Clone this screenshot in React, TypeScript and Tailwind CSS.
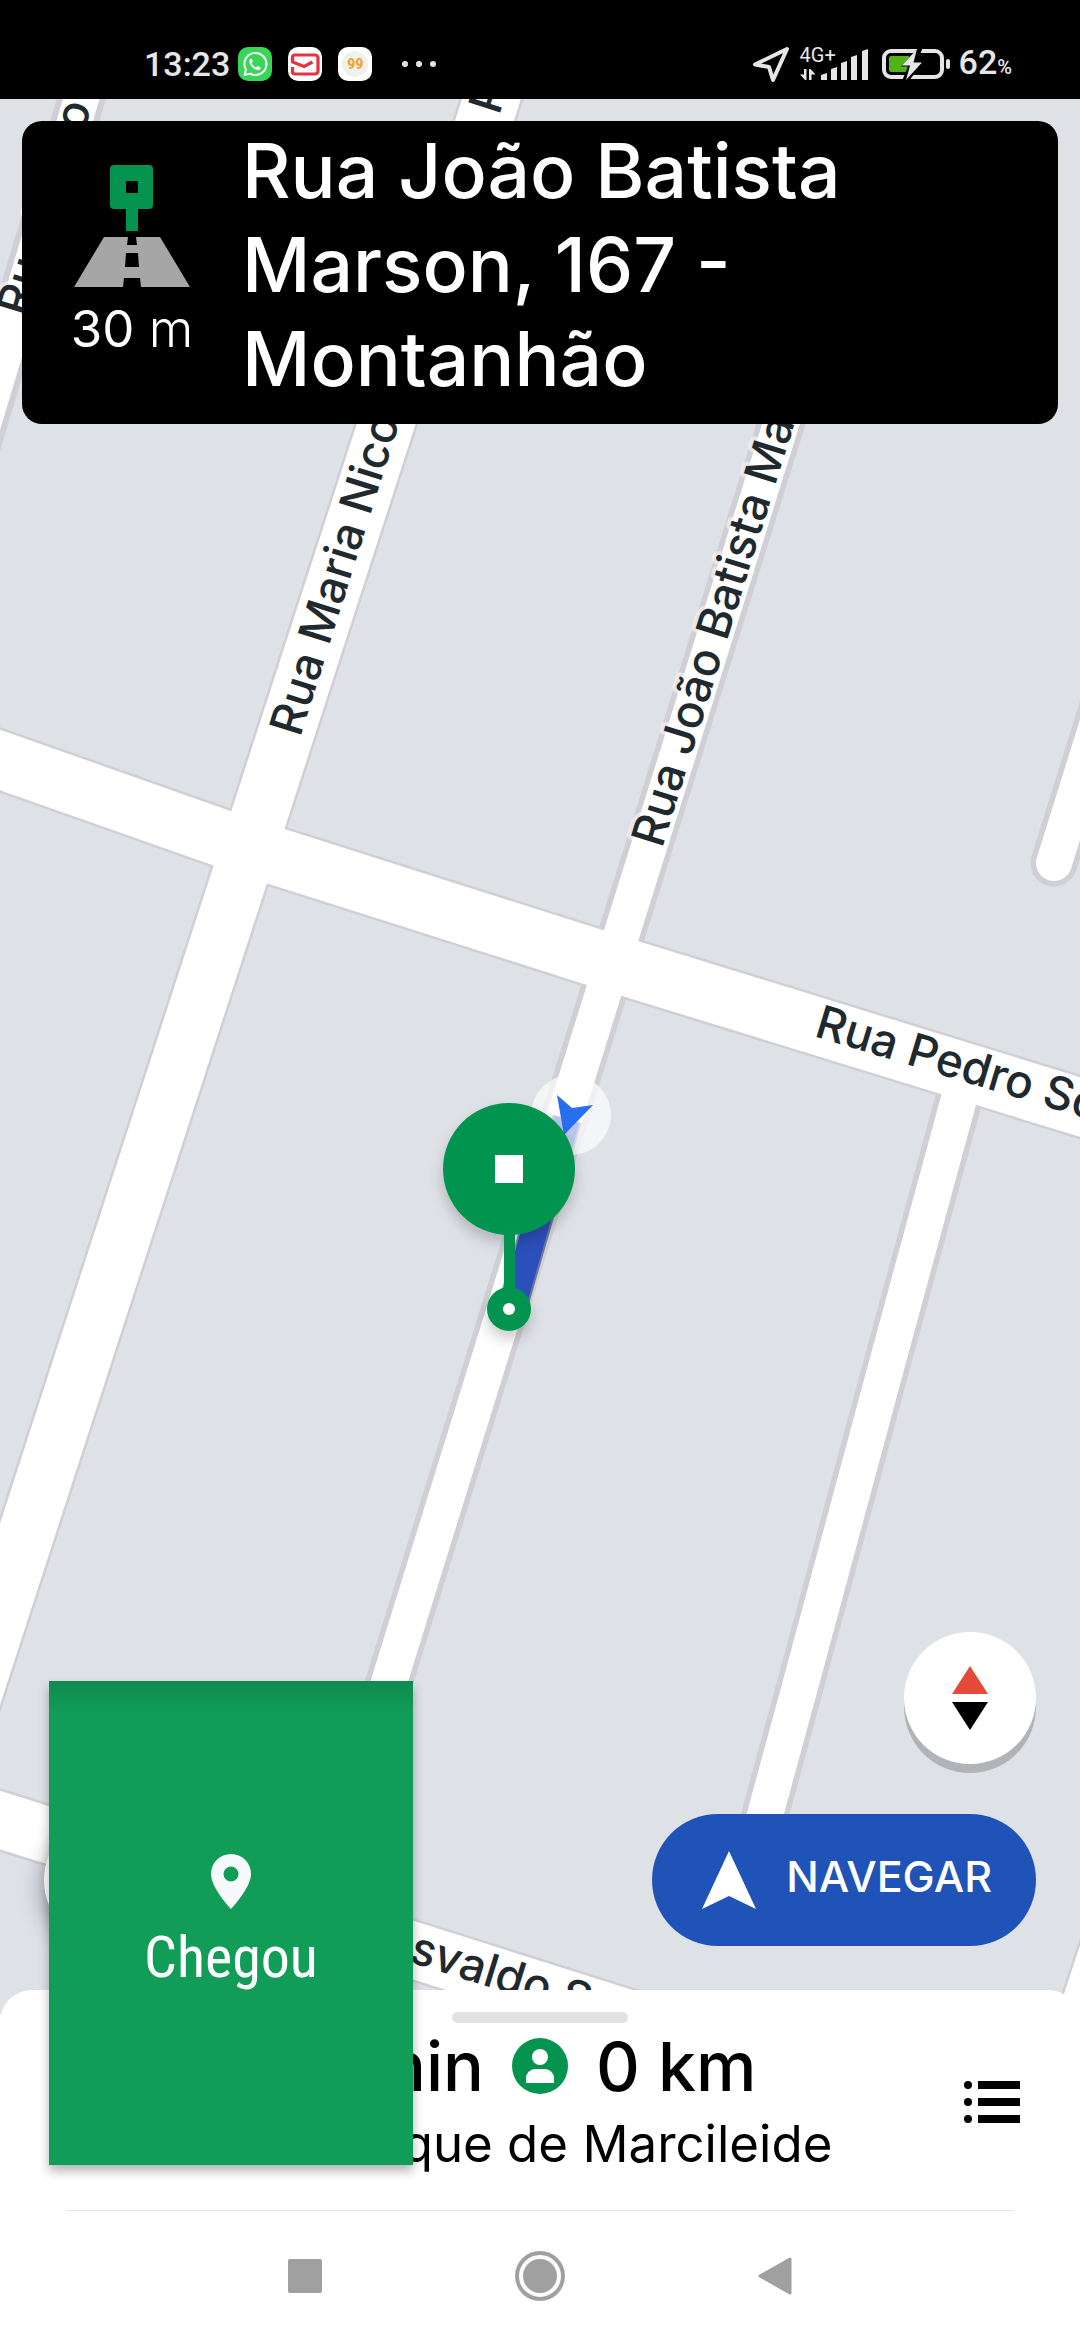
import React from 'react';

const APP_FONT = "font-['Inter','Liberation_Sans',sans-serif]";
const STATUS_FONT = "font-['Roboto','Liberation_Sans',sans-serif]";

interface Street {
  id: string;
  points: string;
  outer: number;
  inner: number;
  round?: boolean;
}

const streets: Street[] = [
  { id: 'mario', points: '93,60 -30,469', outer: 47, inner: 35 },
  { id: 'joao-batista', points: '820,300 781,424 626,920 489,1360 337,1850', outer: 47, inner: 36 },
  { id: 'side', points: '960,1095 888,1360 805,1668 750,1870', outer: 47, inner: 36 },
  { id: 'stub', points: '1130,620 1054,863', outer: 47, inner: 36, round: true },
  { id: 'maria', points: '508,48 232,900 -148,2070', outer: 61, inner: 56 },
  { id: 'pedro', points: '-20,753 0,760 250,848 612,963 1080,1107 1120,1119', outer: 62, inner: 57 },
  { id: 'osvaldo', points: '-20,1814 0,1820 413,1950 663,2029', outer: 61, inner: 56 },
  { id: 'corner', points: '1112,1938 1070,2065', outer: 61, inner: 56 },
];

const labels = [
  { text: 'Rua Mário A', x: 27, y: 318, angle: -73 },
  { text: 'P', x: 499, y: 116, angle: -72 },
  { text: 'Rua Maria Nico', x: 300, y: 738, angle: -72.5 },
  { text: 'Rua João Batista Ma', x: 662, y: 849, angle: -72.7 },
  { text: 'Rua Pedro Sc', x: 813, y: 1036, angle: 16.8 },
  { text: 'Osvaldo S', x: 374, y: 1951, angle: 17.3 },
];

const StreetMap: React.FC = () => (
  <svg
    className="absolute inset-x-0 top-0 w-full h-[calc(100%+24px)]"
    viewBox="0 99 1080 1915"
    preserveAspectRatio="xMidYMid slice"
    aria-label="Mapa"
  >
    <defs>
      <filter id="pinShadow" x="-30%" y="-30%" width="160%" height="170%">
        <feDropShadow dx="0" dy="8" stdDeviation="7" floodColor="#000" floodOpacity="0.2" />
      </filter>
    </defs>
    <rect x="0" y="99" width="1080" height="1915" fill="#dee1e6" />

    {/* casings first so that the crossings stay open */}
    {[true, false].map((casing) => (
      <g key={String(casing)} fill="none" stroke={casing ? '#cfcfd5' : '#ffffff'} strokeLinejoin="round">
        {streets.map((s) => (
          <polyline
            key={s.id}
            points={s.points}
            strokeWidth={casing ? s.outer : s.inner}
            strokeLinecap={s.round ? 'round' : 'butt'}
          />
        ))}
      </g>
    ))}

    <g
      className={APP_FONT}
      fontSize="46"
      fontWeight="500"
      fill="#20292d"
      stroke="#ffffff"
      strokeOpacity="0.5"
      strokeWidth="8"
      strokeLinejoin="round"
      paintOrder="stroke"
    >
      {labels.map((l) => (
        <text key={l.text} x={l.x} y={l.y} transform={`rotate(${l.angle} ${l.x} ${l.y})`}>
          {l.text}
        </text>
      ))}
    </g>

    {/* Route */}
    <path d="M567 1119 513 1305" stroke="#1c2f70" strokeOpacity="0.55" strokeWidth="30" />
    <path d="M567 1119 513 1305" stroke="#2b50bb" strokeWidth="26" />

    {/* Current position */}
    <circle cx="571" cy="1115" r="40" fill="#ffffff" fillOpacity="0.68" />
    <path d="M557 1095 572 1108 593 1105 564 1135Z" fill="#276ef1" />

    {/* Destination pin */}
    <g filter="url(#pinShadow)">
      <circle cx="509" cy="1169" r="66" fill="#05944f" />
      <circle cx="509" cy="1309" r="22" fill="#05944f" />
    </g>
    <rect x="504" y="1230" width="11" height="64" fill="#05944f" />
    <rect x="495" y="1155" width="28" height="28" fill="#ffffff" />
    <circle cx="509" cy="1309" r="6" fill="#ffffff" />
  </svg>
);

const StatusBar: React.FC = () => (
  <header className={`h-[99px] bg-black text-[#e6e6e6] flex justify-between pl-36 pr-[68px] pt-[44px] ${STATUS_FONT}`}>
    <div className="flex items-center h-10">
      <span className="text-[34px] leading-10 font-medium">13:23</span>
      <svg className="ml-2 w-[34px] h-[34px]" viewBox="0 0 34 34" aria-label="WhatsApp">
        <rect width="34" height="34" rx="10" fill="#36d657" />
        <path d="M6.600 28 8 22.600A11 11 0 1 1 12.200 26.600Z" fill="none" stroke="#fff" strokeWidth="2" strokeLinejoin="round" />
        <path d="M13 11.500c-1.600.8-2.200 2.300-1.500 4.300 1.300 3.700 3.900 6.200 7.500 7.200 1.900.5 3.500-.3 3.900-2.200l-3.300-1.900-1.600 1.600c-2-.8-3.500-2.300-4.400-4.200l1.300-1.700-1.300-3.100Z" fill="#fff" />
      </svg>
      <svg className="ml-4 w-[34px] h-[34px]" viewBox="0 0 34 34" aria-label="Correio">
        <rect width="34" height="34" rx="10" fill="#fff" />
        <path d="M4.500 20v4.500a2.500 2.500 0 0 0 2.500 2.500h20a3 3 0 0 0 3-3V11a3 3 0 0 0-3-3H7a2.500 2.500 0 0 0-2.500 2.500V15L16 19.500l8.500-4.500" fill="none" stroke="#e8323f" strokeWidth="3.200" />
      </svg>
      <span className="ml-4 size-[34px] rounded-[10px] bg-white flex items-center justify-center">
        <span className="size-[26px] rounded-full bg-[#f0f0f0] text-[#f0a92c] text-[14px] leading-[26px] font-black text-center">99</span>
      </span>
      <span className="ml-[30px] flex gap-2">
        <i className="size-[6px] rounded-full bg-[#e6e6e6]" />
        <i className="size-[6px] rounded-full bg-[#e6e6e6]" />
        <i className="size-[6px] rounded-full bg-[#e6e6e6]" />
      </span>
    </div>

    <div className="flex items-center h-10">
      <svg className="w-[38px] h-[38px]" viewBox="0 0 38 38" aria-label="Localização">
        <path d="M35 4 3 19.500 17 22 21 35Z" fill="none" stroke="#e6e6e6" strokeWidth="4" strokeLinejoin="round" />
      </svg>
      <div className="ml-[10px] relative w-[69px] h-[34px]">
        <span className="absolute left-0 top-0 text-[20px] leading-4">4G+</span>
        <svg className="w-[69px] h-[34px]" viewBox="0 0 69 34" fill="#e6e6e6" aria-label="Sinal">
          <path d="M4 22h2.500v11H5L0 27.500h4ZM9 33V22h1.500l5 5.500h-4V33Z" />
          <path d="M21 28l6-2v7h-6ZM31 22l6-2v13h-6ZM41 16l6-2v19h-6ZM51 10l6-2v25h-6ZM62 4l6-2v31h-6Z" />
        </svg>
      </div>
      <svg className="ml-3 w-[70px] h-[34px]" viewBox="0 0 70 34" aria-label="Bateria">
        <rect x="3" y="4" width="58" height="26" rx="7" fill="none" stroke="#e6e6e6" strokeWidth="4" />
        <rect x="8" y="9" width="21" height="16" rx="2" fill="#4fb319" />
        <path d="M38 0 20 19.500h7L21 34h7L42 15h-6L42 0Z" fill="#000" />
        <path d="M36 2 21 18.500h8L25 33 41 15.500h-8.500Z" fill="#e6e6e6" />
        <rect x="65" y="12" width="4" height="10" rx="2" fill="#e6e6e6" />
      </svg>
      <span className="ml-2 text-[34px] leading-10 font-medium">
        62<span className="text-[20px]">%</span>
      </span>
    </div>
  </header>
);

const DirectionCard: React.FC = () => (
  <section className="relative mx-[22px] mt-[22px] h-[303px] rounded-[20px] bg-black text-white flex items-start">
    <div className="w-[220px] shrink-0 flex flex-col items-center pt-[44px]">
      <svg className="w-[116px] h-[122px]" viewBox="0 0 116 122" aria-hidden="true">
        <path d="M40 0h35a4 4 0 0 1 4 4v36a4 4 0 0 1-4 4H64v22H52V44H40a4 4 0 0 1-4-4V4a4 4 0 0 1 4-4Zm12 16v12h12V16Z" fill="#05944f" fillRule="evenodd" />
        <path d="M30 72h56l30 50H0Z" fill="#a6a6a6" />
        <path d="M54 72h8l1 8H53ZM52 88h12l1 14H51ZM50 113h16l1 9H49Z" fill="#000" />
      </svg>
      <p className="mt-3 text-[51px] leading-[60px]">
        30 <span className="font-light">m</span>
      </p>
    </div>
    <h1 className="pt-[3px] text-[75px] leading-[94px] font-medium max-w-[700px]">
      Rua João Batista Marson, 167 - Montanhão
    </h1>
  </section>
);

const App: React.FC = () => (
  <div className={`min-h-screen flex flex-col bg-white overflow-hidden ${APP_FONT}`}>
    <StatusBar />

    <main className="relative flex-1 flex flex-col justify-between">
      <StreetMap />
      <DirectionCard />

      {/* Map controls */}
      <div className="relative flex items-end justify-between px-11 pb-11">
        <button aria-label="Segurança" className="size-[132px] rounded-full bg-white shadow-[0_8px_24px_rgba(0,0,0,0.4)]" />
        <div className="flex flex-col items-end gap-[50px]">
          <button aria-label="Bússola" className="size-[132px] rounded-full bg-white shadow-[0_9px_0_#b0b3b7] flex items-center justify-center">
            <svg className="w-9 h-16" viewBox="0 0 36 64">
              <path d="M18 0 36 28H0Z" fill="#e54937" />
              <path d="M0 36h36L18 64Z" fill="#000" />
            </svg>
          </button>
          <button className="h-[132px] pl-[50px] pr-11 rounded-full bg-[#1f53b8] text-white flex items-center gap-[30px]">
            <svg className="w-[54px] h-[58px]" viewBox="0 0 54 58" aria-hidden="true">
              <path d="M27 0 54 58 27 45 0 58Z" fill="#fff" />
            </svg>
            <span className="pb-2 text-[43px] leading-[48px] font-medium">NAVEGAR</span>
          </button>
        </div>
      </div>
    </main>

    <footer className="relative bg-white rounded-t-[32px] pt-[22px] text-black">
      <div className="mx-auto w-44 h-[11px] rounded-full bg-[#e2e2e2]" />

      <div className="mt-[7px] px-[60px] grid grid-cols-[56px_1fr_56px] items-center">
        <div className="col-start-2">
          <div className="grid grid-cols-[1fr_auto_1fr] items-center gap-[28px] text-[68px] leading-[72px] font-medium">
            <span className="text-right">0 min</span>
            <svg className="size-14" viewBox="0 0 56 56" aria-label="Passageiro">
              <circle cx="28" cy="28" r="28" fill="#05944f" />
              <circle cx="28" cy="19" r="8" fill="#fff" />
              <path d="M14 45v-5a9 9 0 0 1 9-9h10a9 9 0 0 1 9 9v5Z" fill="#fff" />
            </svg>
            <span>0 km</span>
          </div>
          <p className="mt-3 text-center text-[51px] leading-[60px]">Embarque de Marcileide</p>
        </div>
        <button aria-label="Lista de viagens" className="size-14 flex items-center justify-center">
          <svg className="w-14 h-[42px]" viewBox="0 0 56 42">
            <path d="M14 0h42v8H14ZM14 17h42v8H14ZM14 34h42v8H14Z" />
            <circle cx="4" cy="4" r="4" />
            <circle cx="4" cy="21" r="4" />
            <circle cx="4" cy="38" r="4" />
          </svg>
        </button>
      </div>

      <hr className="mt-9 mx-[66px] border-[#e6e6e6]" />

      <nav className="h-[129px] flex items-center justify-center gap-[185px]">
        <button aria-label="Recentes" className="size-[50px] flex items-center justify-center">
          <span className="size-[34px] rounded-[2px] bg-[#a0a0a0]" />
        </button>
        <button aria-label="Início" className="size-[50px] rounded-full border-4 border-[#a0a0a0] flex items-center justify-center">
          <span className="size-[34px] rounded-full bg-[#a0a0a0]" />
        </button>
        <button aria-label="Voltar" className="size-[50px] flex items-center justify-center">
          <svg className="w-[34px] h-[38px]" viewBox="0 0 34 38">
            <path d="M32 2v34L2 19Z" fill="#a0a0a0" stroke="#a0a0a0" strokeWidth="3" strokeLinejoin="round" />
          </svg>
        </button>
      </nav>

      {/* Floating arrival button, sits over map and sheet */}
      <button className="absolute left-[49px] bottom-[175px] w-[364px] h-[484px] bg-[#119d57] bg-[linear-gradient(#0f8b4e,#119d57_32px)] shadow-[0_6px_10px_rgba(0,0,0,0.3)] text-white flex flex-col items-center justify-center">
        <svg className="w-10 h-[55px]" viewBox="0 0 40 55" aria-hidden="true">
          <path d="M20 0A20 20 0 0 0 0 20c0 14 20 35 20 35s20-21 20-35A20 20 0 0 0 20 0Zm0 12.500a7.500 7.500 0 1 1 0 15 7.500 7.500 0 0 1 0-15Z" fill="#f7fafc" fillRule="evenodd" />
        </svg>
        <span className="mt-3 text-[58px] leading-[72px] font-['Roboto_Condensed','Liberation_Sans_Narrow','Roboto',sans-serif]">Chegou</span>
      </button>
    </footer>
  </div>
);

export default App;
